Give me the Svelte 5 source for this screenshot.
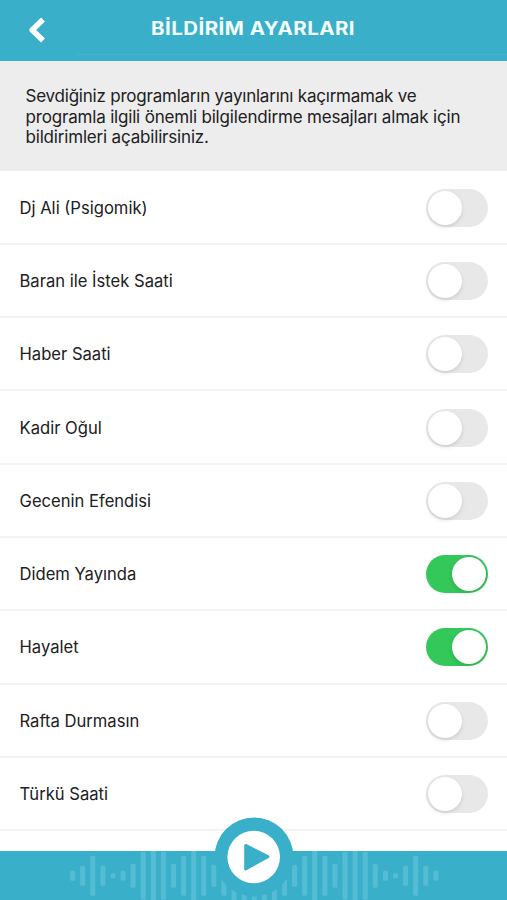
<script>
  let programs = $state([
    { name: 'Dj Ali (Psigomik)', on: false },
    { name: 'Baran ile İstek Saati', on: false },
    { name: 'Haber Saati', on: false },
    { name: 'Kadir Oğul', on: false },
    { name: 'Gecenin Efendisi', on: false },
    { name: 'Didem Yayında', on: true },
    { name: 'Hayalet', on: true },
    { name: 'Rafta Durmasın', on: false },
    { name: 'Türkü Saati', on: false },
  ]);

  const half = [10, 20, 40, 20, 5, 10, 24, 48, 60, 48, 24, 40, 60, 40, 22, 40, 60, 60];
  const bars = [...half, 60, ...[...half].reverse()];
</script>

<main>
  <header>
    <button class="back" aria-label="Geri">
      <svg width="20" height="28" viewBox="0 0 20 28">
        <path d="M16 3.6 5.2 14 16 24.4" fill="none" stroke="#fff" stroke-width="5.6" stroke-linejoin="round" />
      </svg>
    </button>
    <h1>BİLDİRİM AYARLARI</h1>
  </header>

  <p class="intro">
    <span>Sevdiğiniz programların yayınlarını kaçırmamak ve</span>
    <span>programla ilgili önemli bilgilendirme mesajları almak için</span>
    <span>bildirimleri açabilirsiniz.</span>
  </p>

  <ul>
    {#each programs as program}
      <li>
        <span>{program.name}</span>
        <button
          class="switch"
          class:on={program.on}
          role="switch"
          aria-checked={program.on}
          aria-label={program.name}
          onclick={() => (program.on = !program.on)}
        ><i></i></button>
      </li>
    {/each}
  </ul>

  <footer>
    <svg class="wave" width="507" height="49" viewBox="0 0 507 49">
      {#each bars as h, i}
        <rect x={70.1 + i * 10.09} y={24.7 - h / 2} width="5" height={h} rx="1.5" />
      {/each}
    </svg>
    <button class="play" aria-label="Oynat">
      <svg width="80" height="80" viewBox="0 0 80 80">
        <circle cx="40" cy="40" r="39.5" fill="#3aafc9" />
        <circle cx="39.7" cy="40" r="26.3" fill="#fff" />
        <path d="M32 28.7 54.2 40 32 52.3Z" transform="translate(-.3 -.3)" fill="#3aafc9" stroke="#3aafc9" stroke-width="3" stroke-linejoin="round" />
      </svg>
    </button>
  </footer>
</main>

<style>
  :global(body) { margin: 0; background: #fff; }
  main {
    width: 507px;
    height: 900px;
    overflow: hidden;
    display: flex;
    flex-direction: column;
    background: #fff;
    color: #202022;
    font-family: Inter, "Liberation Sans", sans-serif;
  }
  button { border: 0; padding: 0; background: none; cursor: pointer; display: block; }
  svg { display: block; }
  header {
    position: relative;
    flex: none;
    box-sizing: border-box;
    height: 61px;
    display: flex;
    align-items: center;
    justify-content: center;
    padding-bottom: 5px;
    background: linear-gradient(#42b4cf, #42b4cf) 76px 54px / 431px 1px no-repeat #3aafc9;
  }
  .back { position: absolute; left: 27px; top: 16px; }
  h1 {
    margin: 0;
    color: #f4feff;
    font-size: 18.3px;
    font-weight: 700;
    line-height: 24px;
    letter-spacing: 0.4px;
    white-space: nowrap;
    transform: scaleX(1.12);
  }
  .intro {
    flex: none;
    box-sizing: border-box;
    height: 110px;
    margin: 0;
    padding: 25px 0 0 25.5px;
    background: #ededed;
    font-size: 17px;
    line-height: 20.5px;
    letter-spacing: -0.18px;
    white-space: nowrap;
  }
  .intro span { display: block; }
  .intro span:first-child { letter-spacing: -0.22px; }
  ul { flex: 1; min-height: 0; margin: 0; padding: 0.5px 0 0; list-style: none; }
  li {
    box-sizing: border-box;
    height: 73.3px;
    display: flex;
    align-items: center;
    justify-content: space-between;
    padding: 1px 19px 0 19.5px;
    border-bottom: 2px solid #f3f3f3;
    font-size: 16.6px;
    white-space: nowrap;
  }
  .switch {
    box-sizing: border-box;
    width: 62.5px;
    height: 38px;
    padding: 2px;
    border-radius: 19px;
    background: #e8e8e8;
    display: flex;
    align-items: center;
  }
  .switch i {
    width: 34px;
    height: 34px;
    border-radius: 50%;
    background: #fff;
    box-shadow: 0 2px 4px rgba(0, 0, 0, 0.12);
  }
  .switch.on { background: #34c759; justify-content: flex-end; }
  footer { position: relative; flex: none; height: 49px; background: #3aafc9; }
  .wave rect { fill: #55bdd3; }
  .play { position: absolute; left: 214px; top: -34px; }
</style>
